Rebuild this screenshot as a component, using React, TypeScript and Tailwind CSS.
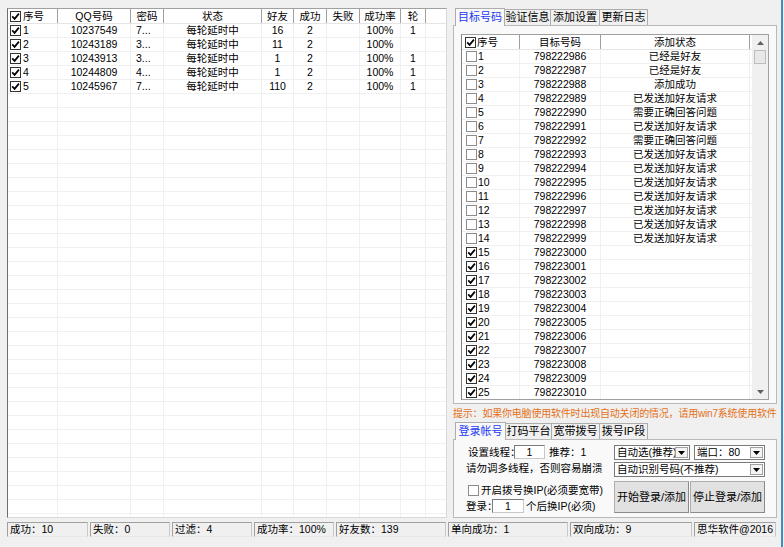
import React from "react";

const FONT = "font-['Liberation_Sans','Noto_Sans_CJK_SC',sans-serif]";

const Check = ({ on }: { on: boolean }) => (
  <span
    className={`inline-flex h-[11px] w-[11px] shrink-0 items-center justify-center border bg-white ${
      on ? "border-[#333333]" : "border-[#8c8c8c]"
    }`}
  >
    {on && (
      <svg width="9" height="9" viewBox="0 0 9 9">
        <path d="M1.2 4.4 L3.6 6.9 L7.9 1.6" fill="none" stroke="#000" strokeWidth="1.7" />
      </svg>
    )}
  </span>
);

const leftW = ["w-[50px]", "w-[73px]", "w-[33px]", "w-[98px]", "w-[32px]", "w-[33px]", "w-[33px]", "w-[41px]", "w-[25px]"];
const leftHead = ["序号", "QQ号码", "密码", "状态", "好友", "成功", "失败", "成功率", "轮"];

const accounts = [
  ["1", "10237549", "7...", "每轮延时中", "16", "2", "", "100%", "1"],
  ["2", "10243189", "3...", "每轮延时中", "11", "2", "", "100%", ""],
  ["3", "10243913", "3...", "每轮延时中", "1", "2", "", "100%", "1"],
  ["4", "10244809", "4...", "每轮延时中", "1", "2", "", "100%", "1"],
  ["5", "10245967", "7...", "每轮延时中", "110", "2", "", "100%", "1"],
];

const AccountTable = () => {
  const rows = Array.from({ length: 36 }, (_, i) => accounts[i] ?? null);
  return (
    <div className="h-[510px] w-[440px] overflow-hidden border border-l-[#6e6e6e] border-t-[#a0a0a0] border-r-[#d8d8d8] border-b-[#d8d8d8] bg-white">
      <div className="flex h-[15px] border-b border-[#e5e5e5] leading-[14px]">
        {leftHead.map((h, i) => (
          <div
            key={h}
            className={`flex shrink-0 items-center border-r border-[#a0a0a0] ${leftW[i]} ${
              i === 0 ? "gap-[2px] pl-[2px]" : "justify-center"
            }`}
          >
            {i === 0 && <Check on />}
            {h}
          </div>
        ))}
        <div className="flex-1" />
      </div>
      {rows.map((r, ri) => (
        <div key={ri} className="flex h-[14px] border-b border-[#f0f0f0] leading-[13px]">
          {leftW.map((w, ci) => (
            <div
              key={ci}
              className={`flex shrink-0 items-center whitespace-nowrap border-r border-[#f0f0f0] ${w} ${
                ci === 0 ? "gap-[2px] pl-[2px]" : ci === 2 ? "pl-[5px]" : "justify-center"
              }`}
            >
              {r && ci === 0 && <Check on />}
              {r ? r[ci] : ""}
            </div>
          ))}
          <div className="flex-1" />
        </div>
      ))}
    </div>
  );
};

const Tabs = ({ items, widths }: { items: string[]; widths: string[] }) => (
  <div className="flex h-[17px] items-end pl-[2px] leading-[15px]">
    {items.map((t, i) =>
      i === 0 ? (
        <div
          key={t}
          className={`relative z-10 -mb-px flex h-[18px] items-center justify-center border border-b-0 border-[#adadad] bg-[#f9f9f9] text-[11px] text-[#1d3cf2] ${widths[i]}`}
        >
          {t}
        </div>
      ) : (
        <div
          key={t}
          className={`-ml-px flex h-[16px] items-center justify-center border border-b-0 border-[#adadad] bg-[#f0f0f0] text-[11px] ${widths[i]}`}
        >
          {t}
        </div>
      )
    )}
  </div>
);

const statusText = [
  "已经是好友",
  "已经是好友",
  "添加成功",
  "已发送加好友请求",
  "需要正确回答问题",
  "已发送加好友请求",
  "需要正确回答问题",
  "已发送加好友请求",
  "已发送加好友请求",
  "已发送加好友请求",
  "已发送加好友请求",
  "已发送加好友请求",
  "已发送加好友请求",
  "已发送加好友请求",
];

const targets = Array.from({ length: 25 }, (_, i) => ({
  n: i + 1,
  qq: String(798222986 + i),
  status: statusText[i] ?? "",
  on: i >= 14,
}));

const Arrow = ({ up }: { up?: boolean }) => (
  <svg width="7" height="4" viewBox="0 0 7 4">
    <path d={up ? "M0 4 L3.5 0 L7 4 Z" : "M0 0 L3.5 4 L7 0 Z"} fill="#606060" />
  </svg>
);

const TargetList = () => (
  <div className="flex h-[366px] overflow-hidden border border-[#a0a0a0] border-l-[#828282] bg-white">
    <div className="flex-1">
      <div className="flex h-[15px] border-b border-[#e5e5e5] leading-[14px]">
        <div className="flex w-[58px] shrink-0 items-center gap-[1px] border-r border-[#a0a0a0] pl-[3px]">
          <Check on />
          序号
        </div>
        <div className="flex w-[81px] shrink-0 items-center justify-center border-r border-[#a0a0a0]">目标号码</div>
        <div className="flex w-[149px] shrink-0 items-center justify-center border-r border-[#a0a0a0]">添加状态</div>
        <div className="flex-1" />
      </div>
      {targets.map((t) => (
        <div key={t.n} className="flex h-[14px] border-b border-[#f0f0f0] leading-[13px]">
          <div className="flex w-[58px] shrink-0 items-center gap-[1px] border-r border-[#f0f0f0] pl-[4px]">
            <Check on={t.on} />
            {t.n}
          </div>
          <div className="flex w-[81px] shrink-0 items-center justify-center border-r border-[#f0f0f0]">{t.qq}</div>
          <div className="flex w-[149px] shrink-0 items-center justify-center border-r border-[#f0f0f0]">{t.status}</div>
          <div className="flex-1" />
        </div>
      ))}
    </div>
    <div className="flex w-[16px] flex-col bg-[#f0f0f0]">
      <div className="flex h-[15px] items-center justify-center">
        <Arrow up />
      </div>
      <div className="mx-auto h-[14px] w-[12px] border border-[#bcbcbc] bg-[#e8e8e8]" />
      <div className="flex-1" />
      <div className="flex h-[15px] items-center justify-center">
        <Arrow />
      </div>
    </div>
  </div>
);

const Select = ({ w, text }: { w: string; text: string }) => (
  <div className={`flex h-[15px] items-center border border-[#7a7a7a] bg-white leading-[13px] ${w}`}>
    <span className="flex-1 overflow-hidden whitespace-nowrap pl-[2px]">{text}</span>
    <span className="mr-px flex h-[11px] w-[13px] items-center justify-center border border-[#a0a0a0] bg-[#f4f4f4]">
      <svg width="7" height="4" viewBox="0 0 7 4">
        <path d="M0 0 L3.5 4 L7 0 Z" fill="#000" />
      </svg>
    </span>
  </div>
);

const Input = ({ w, value }: { w: string; value: string }) => (
  <div className={`flex h-[14px] items-center justify-center border border-[#7a7a7a] border-r-[#c8c8c8] border-b-[#c8c8c8] bg-white leading-[12px] ${w}`}>
    {value}
  </div>
);

const LoginPanel = () => (
  <div className="flex h-[79px] border border-[#b9b9b9] bg-[#f9f9f9] pl-[12px] pt-[5px] leading-[14px]">
    <div className="flex w-[148px] flex-col">
      <div className="flex h-[14px] items-center whitespace-nowrap">
        <span className="w-[48px] pl-[2px]">设置线程：</span>
        <Input w="w-[31px]" value="1" />
        <span className="ml-[4px]">推荐：1</span>
      </div>
      <div className="mt-[2px] flex h-[14px] items-center whitespace-nowrap">请勿调多线程，否则容易崩溃</div>
      <div className="mt-[8px] flex h-[14px] items-center gap-[1px] whitespace-nowrap pl-[2px]">
        <Check on={false} />
        <span className="ml-[1px]">开启拨号换IP(必须要宽带)</span>
      </div>
      <div className="mt-[2px] flex h-[14px] items-center whitespace-nowrap">
        <span className="w-[26px]">登录：</span>
        <Input w="w-[32px]" value="1" />
        <span className="ml-[2px]">个后换IP(必须)</span>
      </div>
    </div>
    <div className="flex w-[152px] flex-col">
      <div className="flex gap-[4px]">
        <Select w="w-[76px]" text="自动选(推荐)" />
        <Select w="w-[71px]" text="端口：80" />
      </div>
      <div className="mt-[2px]">
        <Select w="w-[151px]" text="自动识别号码(不推荐)" />
      </div>
      <div className="mt-[4px] flex gap-[1px]">
        <div className="flex h-[32px] w-[75px] items-center justify-center border border-[#adadad] border-b-[#8a8a8a] border-r-[#8a8a8a] bg-[#e1e1e1] text-[11px]">
          开始登录/添加
        </div>
        <div className="flex h-[32px] w-[75px] items-center justify-center border border-[#adadad] border-b-[#8a8a8a] border-r-[#8a8a8a] bg-[#e1e1e1] text-[11px]">
          停止登录/添加
        </div>
      </div>
    </div>
  </div>
);

const statusBar = [
  ["w-[81px]", "成功：10"],
  ["w-[80px]", "失败：0"],
  ["w-[80px]", "过滤：4"],
  ["w-[80px]", "成功率：100%"],
  ["w-[110px]", "好友数：139"],
  ["w-[120px]", "单向成功：1"],
  ["w-[122px]", "双向成功：9"],
  ["w-[82px]", "思华软件@2016"],
];

export default function App() {
  return (
    <div className={`flex h-[547px] w-[784px] overflow-hidden bg-[#f0f0f0] text-[10.5px] text-black ${FONT}`}>
      <div className="flex w-[781px] flex-col pt-[8px]">
        <div className="flex h-[510px] pl-[7px]">
          <AccountTable />
          <div className="ml-[6px] flex w-[324px] flex-col">
            <Tabs items={["目标号码", "验证信息", "添加设置", "更新日志"]} widths={["w-[50px]", "w-[47px]", "w-[50px]", "w-[49px]"]} />
            <div className="h-[380px] border border-[#b9b9b9] bg-[#f9f9f9] px-[7px] pt-[8px]">
              <TargetList />
            </div>
            <div className="flex h-[18px] items-center whitespace-nowrap text-[10px] tracking-[-0.2px] text-[#e3701a]">
              提示：如果你电脑使用软件时出现自动关闭的情况，请用win7系统使用软件
            </div>
            <Tabs items={["登录帐号", "打码平台", "宽带拨号", "拨号IP段"]} widths={["w-[51px]", "w-[47px]", "w-[49px]", "w-[49px]"]} />
            <LoginPanel />
          </div>
        </div>
        <div className="mt-[4px] flex h-[15px] gap-[2px] pl-[7px] leading-[13px]">
          {statusBar.map(([w, t]) => (
            <div
              key={t}
              className={`flex items-center whitespace-nowrap border border-[#a0a0a0] border-b-[#e8e8e8] border-r-[#c8c8c8] pl-[2px] ${w}`}
            >
              {t}
            </div>
          ))}
        </div>
      </div>
      <div className="w-[2px] bg-[#3d8dbf]" />
      <div className="flex-1" />
    </div>
  );
}
